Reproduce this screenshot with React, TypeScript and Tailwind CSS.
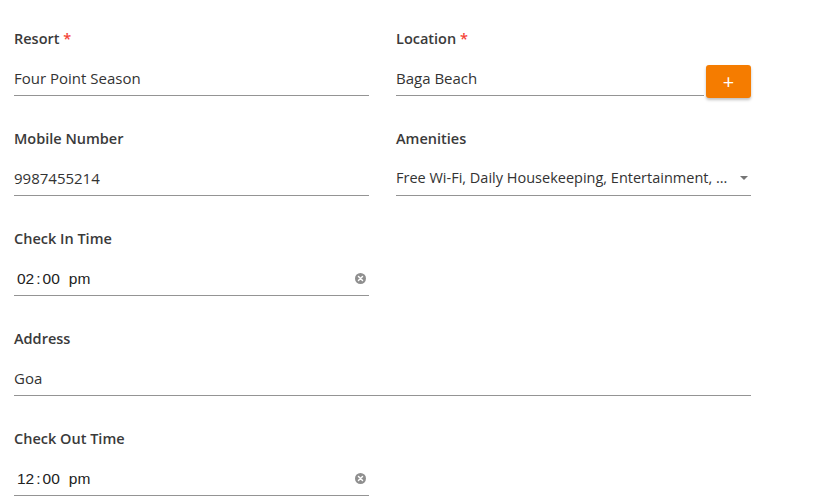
import React from 'react';

const font = { fontFamily: '"Open Sans", "Noto Sans", sans-serif' };

function Label({ text, required }: { text: string; required?: boolean }) {
  return (
    <div className="h-5 leading-5 text-[14.5px] font-semibold text-[#3a3a3a]">
      {text}
      {required && <span className="text-[#f44336]"> *</span>}
    </div>
  );
}

function TextField({ label, value, required }: { label: string; value: string; required?: boolean }) {
  return (
    <div className="mb-[33px]">
      <Label text={label} required={required} />
      <div className="mt-[14px] h-[33px] pb-[2px] border-b border-[#949494] flex items-center text-[15px] text-[#333]">
        {value}
      </div>
    </div>
  );
}

function ClearIcon() {
  return (
    <svg width="11" height="11" viewBox="0 0 12 12">
      <circle cx="6" cy="6" r="6" fill="#8f8f8f" />
      <path d="M3.8 3.8 L8.2 8.2 M8.2 3.8 L3.8 8.2" stroke="#fff" strokeWidth="1.6" strokeLinecap="round" />
    </svg>
  );
}

function TimeField({ label, value }: { label: string; value: string }) {
  const [hh, mm, ap] = value.split(/[: ]/);
  return (
    <div className="mb-[33px]">
      <Label text={label} />
      <div className="mt-[14px] h-[33px] pb-[1px] border-b border-[#949494] flex items-center justify-between text-[15.5px] text-[#222]">
        <span className="pl-[3px]" style={{ fontFamily: '"Liberation Sans", Arial, sans-serif' }}>
          {hh}
          <span className="px-[2px]">:</span>
          {mm}
          <span className="ml-[9px]">{ap}</span>
        </span>
        <span className="pr-[3px] flex items-center">
          <ClearIcon />
        </span>
      </div>
    </div>
  );
}

export default function App() {
  return (
    <div className="w-[838px] h-[497px] bg-white overflow-hidden" style={font}>
      <div className="pt-[29px] pl-[14px] w-[751px]">
        <div className="grid grid-cols-2 gap-x-[27px]">
          <TextField label="Resort" value="Four Point Season" required />
          <div className="mb-[33px]">
            <Label text="Location" required />
            <div className="mt-[14px] h-[33px] flex items-start">
              <div className="flex-1 h-[33px] pb-[2px] border-b border-[#949494] flex items-center text-[15px] text-[#333]">
                Baga Beach
              </div>
              <button className="ml-[2px] mt-[2px] w-[45px] h-[33px] shrink-0 rounded-[3px] bg-[#f57c00] text-white text-[20px] leading-none flex items-center justify-center shadow-[0_2px_3px_rgba(0,0,0,0.25)]">
                +
              </button>
            </div>
          </div>
          <TextField label="Mobile Number" value="9987455214" />
          <div className="mb-[33px]">
            <Label text="Amenities" />
            <div className="mt-[14px] h-[33px] pb-[2px] border-b border-[#949494] flex items-center text-[14.5px] text-[#333]">
              <span className="flex-1 min-w-0 whitespace-nowrap pr-2">
                Free Wi-Fi, Daily Housekeeping, Entertainment, ...
              </span>
              <span className="w-0 h-0 border-l-[4px] border-r-[4px] border-t-[4px] border-l-transparent border-r-transparent border-t-[#757575] mr-[3px]" />
            </div>
          </div>
          <TimeField label="Check In Time" value="02:00 pm" />
          <div />
          <div className="col-span-2">
            <TextField label="Address" value="Goa" />
          </div>
          <TimeField label="Check Out Time" value="12:00 pm" />
          <div />
        </div>
      </div>
    </div>
  );
}
